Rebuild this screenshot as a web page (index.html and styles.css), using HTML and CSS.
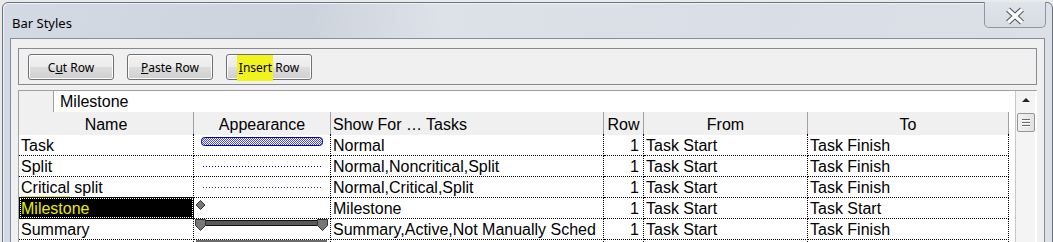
FILE: index.html
```html
<!DOCTYPE html>
<html lang="en">
<head>
  <meta charset="UTF-8" />
  <meta name="viewport" content="width=device-width, initial-scale=1.0"/>
  <title>Bar Styles</title>
  <link rel="stylesheet" href="styles.css">
</head>
<body>

  <div class="window">
    <div class="titlebar">
      <span class="title">Bar Styles</span>
      <div class="close-btn">
        <svg width="20" height="18" viewBox="0 0 20 18">
          <path d="M3 2.5 L17 15.5 M17 2.5 L3 15.5" stroke="#4b4f55" stroke-width="5.5" fill="none"/>
          <path d="M3 2.5 L17 15.5 M17 2.5 L3 15.5" stroke="#ffffff" stroke-width="3.5" fill="none"/>
        </svg>
      </div>
    </div>

    <div class="client">
      <div class="toolbar">
        <button class="btn">C<u>u</u>t Row</button>
        <button class="btn"><u>P</u>aste Row</button>
        <button class="btn"><span class="hl"><u>I</u>nsert</span> Row</button>
      </div>

      <div class="grid">
        <div class="sheet">
          <div class="editrow">
            <div class="corner"></div>
            <div class="editval">Milestone</div>
          </div>

          <div class="row head">
            <div class="cell center">Name</div>
            <div class="cell center">Appearance</div>
            <div class="cell">Show For … Tasks</div>
            <div class="cell center">Row</div>
            <div class="cell center">From</div>
            <div class="cell center">To</div>
          </div>

          <div class="row">
            <div class="cell">Task</div>
            <div class="cell look">
              <svg width="136" height="20">
                <defs>
                  <pattern id="chk" width="2" height="2" patternUnits="userSpaceOnUse">
                    <rect width="2" height="2" fill="#ffffff"/>
                    <rect width="1" height="1" fill="#4646ea"/>
                    <rect x="1" y="1" width="1" height="1" fill="#4646ea"/>
                  </pattern>
                </defs>
                <rect x="7.5" y="3.5" width="121" height="8" rx="3" fill="url(#chk)" stroke="#0000b4"/>
              </svg>
            </div>
            <div class="cell">Normal</div>
            <div class="cell num">1</div>
            <div class="cell">Task Start</div>
            <div class="cell">Task Finish</div>
          </div>

          <div class="row">
            <div class="cell">Split</div>
            <div class="cell look">
              <svg width="136" height="20">
                <line x1="9" y1="11.5" x2="127" y2="11.5" stroke="#0000a0" stroke-dasharray="1 2"/>
              </svg>
            </div>
            <div class="cell">Normal,Noncritical,Split</div>
            <div class="cell num">1</div>
            <div class="cell">Task Start</div>
            <div class="cell">Task Finish</div>
          </div>

          <div class="row">
            <div class="cell"><span class="mark">Critical</span> split</div>
            <div class="cell look">
              <svg width="136" height="20">
                <line x1="9" y1="11.5" x2="127" y2="11.5" stroke="#35305a" stroke-dasharray="1 2"/>
              </svg>
            </div>
            <div class="cell">Normal,Critical,Split</div>
            <div class="cell num">1</div>
            <div class="cell">Task Start</div>
            <div class="cell">Task Finish</div>
          </div>

          <div class="row">
            <div class="cell selected">Milestone</div>
            <div class="cell look">
              <svg width="136" height="20">
                <path d="M6.5 3.5 L11 8 L6.5 12.5 L2 8 Z" fill="#777777" stroke="#333333"/>
              </svg>
            </div>
            <div class="cell">Milestone</div>
            <div class="cell num">1</div>
            <div class="cell">Task Start</div>
            <div class="cell">Task Start</div>
          </div>

          <div class="row">
            <div class="cell">Summary</div>
            <div class="cell look">
              <svg width="136" height="20">
                <rect x="10.5" y="2.5" width="114" height="5" fill="#5a5a5a" stroke="#111111"/>
                <path d="M1.5 1.5 H11.5 V7.5 L6.5 12.5 L1.5 7.5 Z" fill="#777777" stroke="#333333"/>
                <path d="M123.5 1.5 H133.5 V7.5 L128.5 12.5 L123.5 7.5 Z" fill="#777777" stroke="#333333"/>
              </svg>
            </div>
            <div class="cell">Summary,Active,Not Manually Sched</div>
            <div class="cell num">1</div>
            <div class="cell">Task Start</div>
            <div class="cell">Task Finish</div>
          </div>

          <div class="row">
            <div class="cell"></div>
            <div class="cell look">
              <svg width="136" height="20">
                <rect x="2" y="1" width="131" height="3" fill="#6a6a6a"/>
              </svg>
            </div>
            <div class="cell"></div>
            <div class="cell num"></div>
            <div class="cell"></div>
            <div class="cell"></div>
          </div>
        </div>

        <div class="vscroll">
          <div class="arrow-up"></div>
          <div class="thumb">
            <span></span><span></span><span></span>
          </div>
        </div>
      </div>
    </div>
  </div>

</body>
</html>
```

FILE: styles.css
```css
* {
  margin: 0;
  padding: 0;
  box-sizing: border-box;
}

html, body {
  height: 100%;
  overflow: hidden;
}

body {
  background-color: #e9eaec;
  font-family: "Noto Sans", sans-serif;
}

.window {
  margin: 2px 0 0 2px;
  width: 1051px;
  height: 320px;
  border: 1px solid #6c727b;
  border-radius: 6px 6px 0 0;
  background: linear-gradient(100deg, #d4dae3 0%, #cdd3dc 28%, #dde2e9 40%, #d9dee6 70%, #dce1e8 100%);
  box-shadow: inset 1px 1px 0 #eef1f5;
}

.titlebar {
  height: 35px;
  display: flex;
  justify-content: space-between;
  align-items: flex-start;
  padding-left: 9px;
}

.title {
  font-size: 13px;
  color: #000;
  margin-top: 11px;
}

.close-btn {
  width: 62px;
  height: 26px;
  margin-right: 6px;
  margin-top: -1px;
  padding-top: 2px;
  border: 1px solid #8d96a3;
  border-top: none;
  border-radius: 0 0 5px 5px;
  background: linear-gradient(#dfe4ea, #d7dce3);
  display: flex;
  justify-content: center;
  align-items: center;
}

.client {
  margin: 0 7px;
  height: 300px;
  border: 1px solid #878e99;
  background-color: #f0f0f0;
  padding: 9px 7px 0 7px;
}

.toolbar {
  height: 37px;
  border: 1px solid #868a91;
  display: flex;
  gap: 13px;
  padding: 5px 0 0 9px;
}

.btn {
  width: 86px;
  height: 26px;
  border: 1px solid #707070;
  border-radius: 3px;
  background: linear-gradient(#f2f2f2 0%, #ebebeb 48%, #dddddd 52%, #cfcfcf 100%);
  font-family: "Noto Sans", sans-serif;
  font-size: 12px;
  color: #000;
  box-shadow: inset 0 0 0 1px #fcfcfc;
}

.hl {
  background-color: #f2f21c;
  padding: 4px 1px 5px 2px;
  margin: 0 -1px 0 -2px;
}

.grid {
  margin-top: 5px;
  display: flex;
  border-top: 1px solid #a0a0a0;
  border-left: 1px solid #a0a0a0;
  background-color: #fff;
  height: 200px;
}

.sheet {
  width: 996px;
  font-family: "Liberation Sans", Arial, sans-serif;
  font-size: 16px;
  color: #000;
}

.editrow {
  height: 21px;
  display: flex;
}

.corner {
  width: 35px;
  background-color: #f0f0f0;
  border-right: 1px solid #a0a0a0;
}

.editval {
  padding-left: 6px;
  line-height: 21px;
}

.row {
  display: grid;
  grid-template-columns: 175px 137px 273px 40px 164px 201px;
  width: 990px;
  height: 21px;
}

.row .cell {
  border-right: 1px dotted #000;
  border-bottom: 1px dotted #000;
  padding: 2px 2px 0 2px;
  line-height: 19px;
  white-space: nowrap;
}

.row.head {
  height: 22px;
}

.row.head .cell {
  background-color: #f0f0f0;
  border-right: 1px solid #a0a0a0;
  border-bottom: none;
  line-height: 21px;
}

.cell.center {
  text-align: center;
}

.cell.num {
  text-align: right;
  padding-right: 4px;
}

.row .cell.look {
  padding: 0;
}

.cell.look svg {
  display: block;
}

.cell.selected {
  background-color: #000;
  color: #ecec00;
  outline: 1px dotted #fff;
  outline-offset: -2px;
}

.mark {
  border-bottom: 1px solid #e8e800;
}

.vscroll {
  width: 20px;
  border-left: 1px solid #c9c9c9;
  background-color: #f4f4f4;
  display: flex;
  flex-direction: column;
  align-items: center;
}

.arrow-up {
  margin-top: 7px;
  width: 0;
  height: 0;
  border-left: 4px solid transparent;
  border-right: 4px solid transparent;
  border-bottom: 4px solid #222;
}

.thumb {
  margin-top: 11px;
  width: 18px;
  height: 19px;
  border: 1px solid #959595;
  border-radius: 2px;
  background: linear-gradient(90deg, #f2f2f2, #e2e2e2);
  display: flex;
  flex-direction: column;
  justify-content: center;
  align-items: center;
  gap: 2px;
}

.thumb span {
  width: 8px;
  height: 1px;
  background-color: #6a6a6a;
  box-shadow: 0 1px 0 #fff;
}
```
